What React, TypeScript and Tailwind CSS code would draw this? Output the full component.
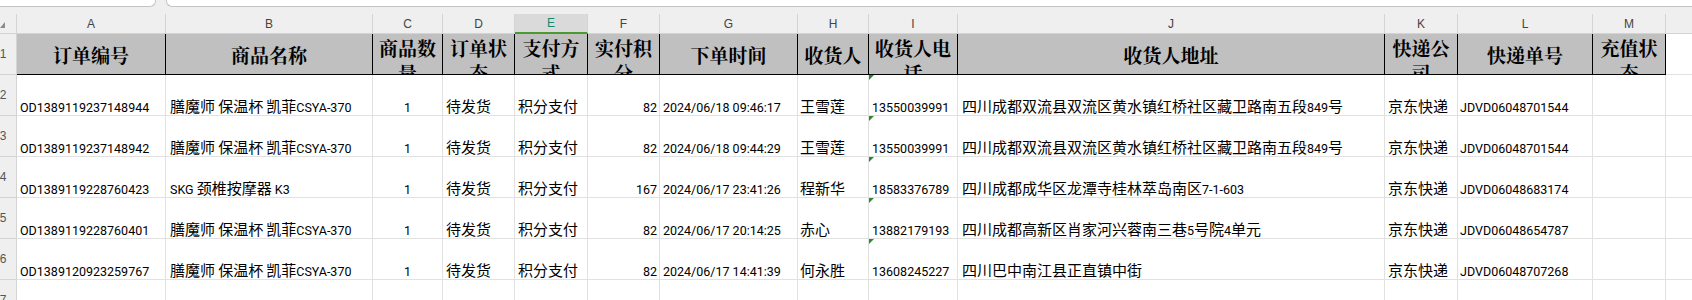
import React from "react";

const columns = [
  { letter: "A", title: "订单编号", wrap: false, cell: "pl-[3px]" },
  { letter: "B", title: "商品名称", wrap: false, cell: "pl-[4px]" },
  { letter: "C", title: "商品数量", wrap: true, cell: "justify-center" },
  { letter: "D", title: "订单状态", wrap: true, cell: "pl-[3px]" },
  { letter: "E", title: "支付方式", wrap: true, cell: "pl-[3px]" },
  { letter: "F", title: "实付积分", wrap: true, cell: "justify-end pr-[2px]" },
  { letter: "G", title: "下单时间", wrap: false, cell: "pl-[3px]" },
  { letter: "H", title: "收货人", wrap: false, cell: "pl-[2px]" },
  { letter: "I", title: "收货人电话", wrap: true, cell: "pl-[3px]" },
  { letter: "J", title: "收货人地址", wrap: false, cell: "pl-[4px]" },
  { letter: "K", title: "快递公司", wrap: true, cell: "pl-[3px]" },
  { letter: "L", title: "快递单号", wrap: false, cell: "pl-[2px]" },
  { letter: "M", title: "充值状态", wrap: true, cell: "" },
];

const thermos = "膳魔师 保温杯 凯菲CSYA-370";
const shuangliu = "四川成都双流县双流区黄水镇红桥社区藏卫路南五段849号";

const rows = [
  ["OD1389119237148944", thermos, "1", "待发货", "积分支付", "82", "2024/06/18 09:46:17", "王雪莲", "13550039991", shuangliu, "京东快递", "JDVD06048701544", ""],
  ["OD1389119237148942", thermos, "1", "待发货", "积分支付", "82", "2024/06/18 09:44:29", "王雪莲", "13550039991", shuangliu, "京东快递", "JDVD06048701544", ""],
  ["OD1389119228760423", "SKG 颈椎按摩器 K3", "1", "待发货", "积分支付", "167", "2024/06/17 23:41:26", "程新华", "18583376789", "四川成都成华区龙潭寺桂林萃岛南区7-1-603", "京东快递", "JDVD06048683174", ""],
  ["OD1389119228760401", thermos, "1", "待发货", "积分支付", "82", "2024/06/17 20:14:25", "赤心", "13882179193", "四川成都高新区肖家河兴蓉南三巷5号院4单元", "京东快递", "JDVD06048654787", ""],
  ["OD1389120923259767", thermos, "1", "待发货", "积分支付", "82", "2024/06/17 14:41:39", "何永胜", "13608245227", "四川巴中南江县正直镇中街", "京东快递", "JDVD06048707268", ""],
  ["", "", "", "", "", "", "", "", "", "", "", "", ""],
];

// cjk runs get the wider chinese font, the rest stays in the number font
function Mixed({ text }: { text: string }) {
  const parts = text.split(/([\u3400-\u9fff]+)/).filter(Boolean);
  return (
    <span>
      {parts.map((p, i) =>
        /[\u3400-\u9fff]/.test(p) ? (
          <span key={i} className="font-['Noto_Sans_CJK_SC',sans-serif] text-[15px]">
            {p}
          </span>
        ) : (
          <span key={i}>{p}</span>
        ),
      )}
    </span>
  );
}

function Corner() {
  return (
    <div className="flex h-[20px] items-center border-b border-r border-[#d4d4d4] bg-[#efefef]">
      <svg width="5" height="6" viewBox="0 0 5 6" className="mt-[3px]">
        <polygon points="0,6 5,0 5,6" fill="#8a8a8a" />
      </svg>
    </div>
  );
}

export default function App() {
  return (
    <div className="h-[300px] w-[1692px] overflow-hidden bg-[#efefef] font-['Roboto',sans-serif]">
      <div className="flex h-[14px] items-start">
        <div className="h-[7px] w-[156px] rounded-br-[6px] border-b border-r border-[#c4c4c4] bg-white" />
        <div className="w-[10px]" />
        <div className="h-[7px] flex-1 rounded-bl-[6px] border-b border-l border-[#c4c4c4] bg-white" />
      </div>

      <div className="grid grid-cols-[17px_149px_207px_70px_72px_73px_72px_138px_71px_89px_427px_73px_135px_73px_120px]">
        {/* column letters */}
        <Corner />
        {columns.map((c) =>
          c.letter === "E" ? (
            <div
              key={c.letter}
              className="flex h-[20px] items-center justify-center border-b-2 border-r border-b-[#4a9b2f] border-r-[#d4d4d4] bg-[#dadada] font-['Liberation_Sans',sans-serif] text-[12px] text-[#1b8670]"
            >
              {c.letter}
            </div>
          ) : (
            <div
              key={c.letter}
              className="flex h-[20px] items-center justify-center border-b border-r border-[#d4d4d4] font-['Liberation_Sans',sans-serif] text-[12px] text-[#444]"
            >
              {c.letter}
            </div>
          ),
        )}
        <div className="h-[20px] border-b border-[#d4d4d4]" />

        {/* title row */}
        <div className="flex h-[41px] items-center overflow-hidden border-b border-r border-[#d4d4d4] bg-[#efefef]">
          <span className="-ml-[2px] w-[10px] text-center font-['Liberation_Sans',sans-serif] text-[12px] text-[#555]">1</span>
        </div>
        {columns.map((c) => (
          <div
            key={c.letter}
            className={
              "flex h-[41px] justify-center overflow-hidden border-b border-r border-black bg-[#c0c0c0] text-center font-['Noto_Serif_CJK_SC','Noto_Sans_CJK_SC',serif] text-[19px] font-bold leading-[25px] text-black " +
              (c.wrap ? "items-start pt-[1px]" : "items-center")
            }
          >
            {c.title}
          </div>
        ))}
        <div className="h-[41px] border-b border-[#e1e1e1] bg-white" />

        {/* data rows */}
        {rows.map((r, ri) => (
          <React.Fragment key={ri}>
            <div className="flex h-[41px] items-center overflow-hidden border-b border-r border-[#d4d4d4] bg-[#efefef]">
              <span className="-ml-[2px] w-[10px] text-center font-['Liberation_Sans',sans-serif] text-[12px] text-[#555]">
                {ri + 2}
              </span>
            </div>
            {columns.map((c, ci) => (
              <div
                key={c.letter}
                className={
                  "relative flex h-[41px] items-end overflow-hidden whitespace-nowrap border-b border-r border-[#e1e1e1] bg-white text-[12.5px] leading-[14px] text-black " +
                  c.cell
                }
              >
                {c.letter === "I" && ri < 5 ? (
                  <svg width="5" height="5" viewBox="0 0 5 5" className="absolute left-0 top-0">
                    <polygon points="0,0 5,0 0,5" fill="#2f8a2f" />
                  </svg>
                ) : null}
                <Mixed text={r[ci]} />
              </div>
            ))}
            <div className="h-[41px] border-b border-[#e1e1e1] bg-white" />
          </React.Fragment>
        ))}
      </div>
    </div>
  );
}
